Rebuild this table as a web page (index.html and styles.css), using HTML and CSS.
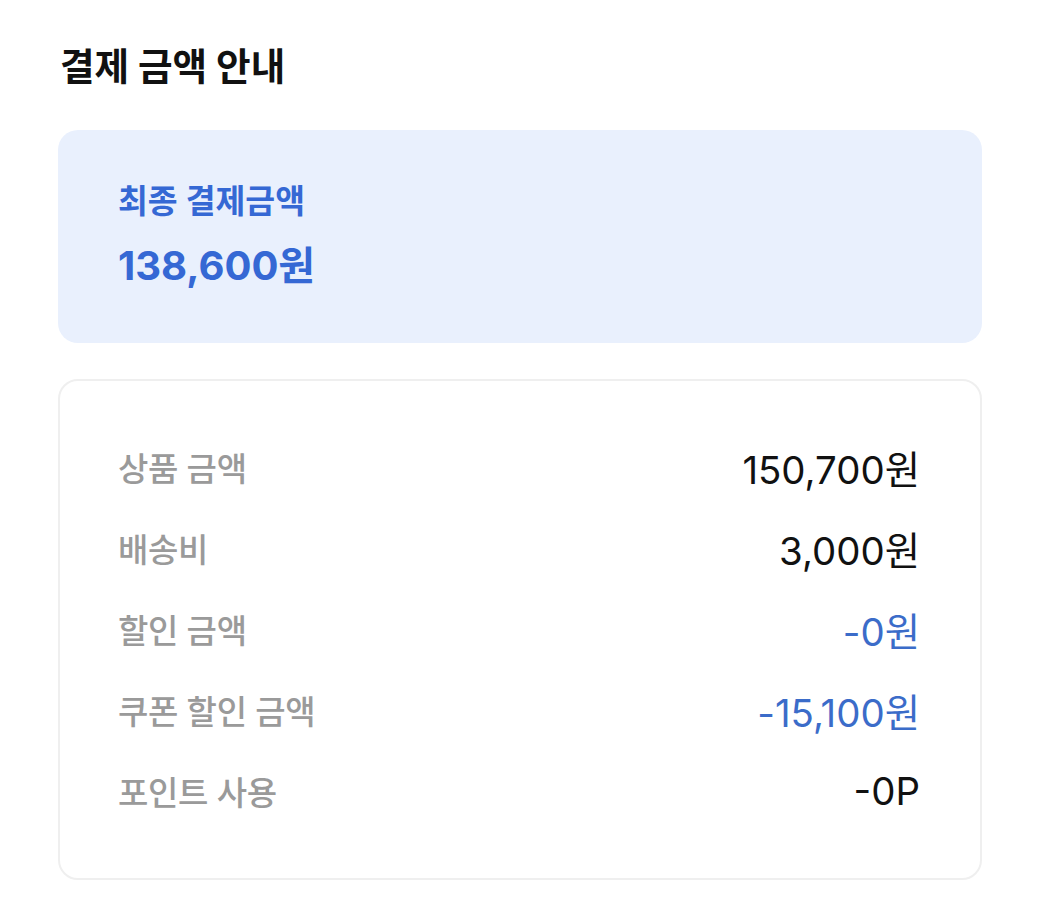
FILE: index.html
```html
<!DOCTYPE html>
<html lang="ko">
<head>
<meta charset="utf-8">
<link rel="stylesheet" href="styles.css">
</head>
<body>
<main class="page">
  <h1 class="title">결제 금액 안내</h1>
  <section class="total-card">
    <div class="total-label">최종 결제금액</div>
    <div class="total-value">138,600원</div>
  </section>
  <section class="detail-card">
    <div class="row"><span class="label">상품 금액</span><span class="value">150,700원</span></div>
    <div class="row"><span class="label">배송비</span><span class="value">3,000원</span></div>
    <div class="row"><span class="label">할인 금액</span><span class="value blue">-0원</span></div>
    <div class="row"><span class="label">쿠폰 할인 금액</span><span class="value blue">-15,100원</span></div>
    <div class="row"><span class="label">포인트 사용</span><span class="value">-0P</span></div>
  </section>
</main>
</body>
</html>
```
FILE: styles.css
```css
* { box-sizing: border-box; }
body {
  margin: 0;
  background: #ffffff;
  font-family: Inter, "Noto Sans CJK KR", sans-serif;
  color: #111;
}
.page {
  padding: 40px 58px 40px 58px;
  width: 1040px;
}
.title {
  margin: 0 0 0 2px;
  font-size: 37.6px;
  font-weight: 700;
  line-height: 54px;
  letter-spacing: 0;
  color: #111;
}
.total-card {
  margin-top: 36px;
  background: #e9f0fd;
  border-radius: 20px;
  padding: 52px 60px 53px;
  display: flex;
  flex-direction: column;
  gap: 20px;
  color: #3568d4;
}
.total-label {
  font-size: 32.4px;
  font-weight: 600;
  line-height: 40px;
  letter-spacing: 0;
}
.total-value {
  font-size: 40px;
  font-weight: 700;
  line-height: 48px;
  letter-spacing: 0;
}
.detail-card {
  margin-top: 36px;
  border: 2px solid #efefef;
  border-radius: 20px;
  padding: 64px 60px 65px 58px;
  display: flex;
  flex-direction: column;
  gap: 37px;
}
.row {
  display: flex;
  justify-content: space-between;
  align-items: center;
  height: 44px;
}
.label {
  font-size: 33px;
  font-weight: 500;
  color: #9a9a9a;
  letter-spacing: -0.3px;
}
.value {
  font-size: 38.4px;
  font-weight: 400;
  color: #111;
  letter-spacing: 0;
}
.value.blue { color: #3b6cc9; }
```
